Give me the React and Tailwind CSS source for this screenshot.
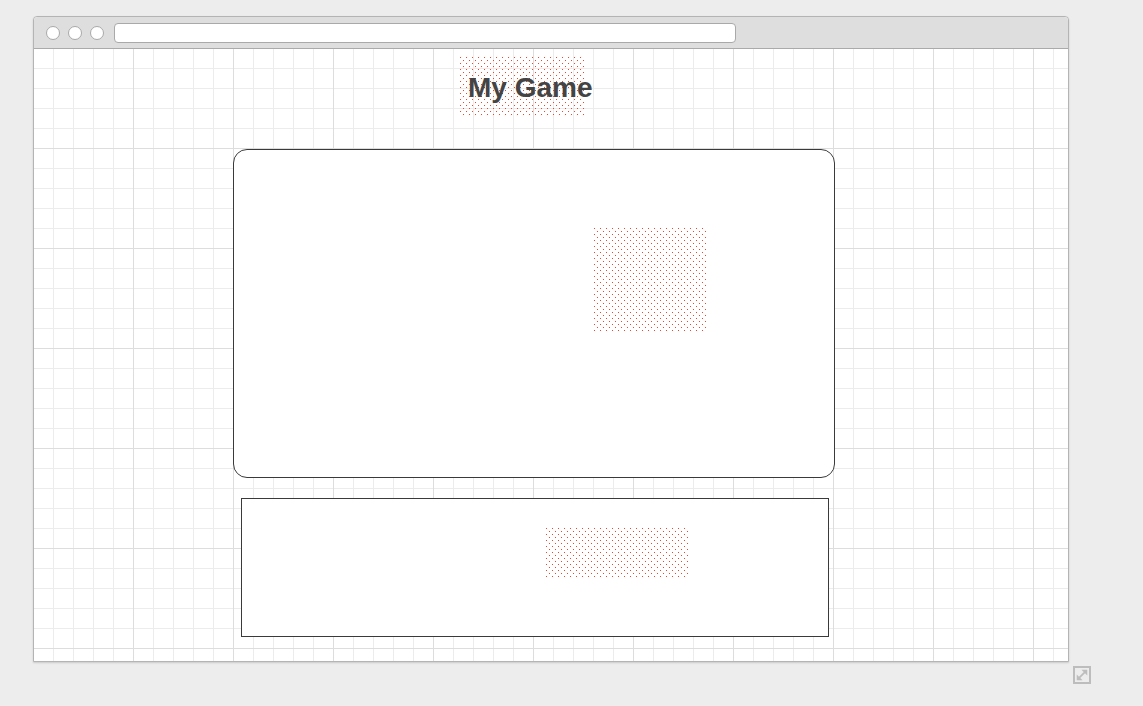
import React from "react";

// dotted red fill used by the mockup placeholders (crisp 1px dots, staggered)
const dots =
  "bg-[conic-gradient(from_270deg_at_1px_1px,#f0462c_90deg,transparent_0),conic-gradient(from_270deg_at_1px_1px,#f0462c_90deg,transparent_0)] bg-[length:6px_6px] bg-[position:1px_1px,4px_4px]";

export default function App() {
  return (
    <div className="relative w-[1143px] h-[706px] bg-[#ededed] overflow-hidden font-['Liberation_Sans',Arial,sans-serif]">
      <div className="absolute left-[33px] top-[16px] w-[1036px] h-[646px] flex flex-col border border-[#b4b4b4] rounded-t-[4px] bg-white shadow-[0_1px_2px_rgba(0,0,0,0.15)]">
        {/* title bar */}
        <div className="h-[32px] shrink-0 flex items-center bg-[#dedede] border-b border-[#aaaaaa] rounded-t-[4px] pl-[12px]">
          <div className="flex gap-[8px]">
            <span className="w-[14px] h-[14px] rounded-full bg-white border border-[#a9a9a9]" />
            <span className="w-[14px] h-[14px] rounded-full bg-white border border-[#a9a9a9]" />
            <span className="w-[14px] h-[14px] rounded-full bg-white border border-[#a9a9a9]" />
          </div>
          <div className="ml-[10px] w-[622px] h-[20px] bg-white border border-[#a9a9a9] rounded-[4px]" />
        </div>

        {/* canvas */}
        <div className="flex-1 flex flex-col bg-white bg-[linear-gradient(to_right,#dddddd_1px,transparent_1px),linear-gradient(to_bottom,#dddddd_1px,transparent_1px),linear-gradient(to_right,#ececec_1px,transparent_1px),linear-gradient(to_bottom,#ececec_1px,transparent_1px)] bg-[length:100px_100px,100px_100px,20px_20px,20px_20px] bg-[position:-1px_-1px]">
          <div className={`ml-[425px] mt-[7px] w-[126px] h-[59px] pt-[4px] ${dots}`}>
            <div className="ml-[9px] whitespace-nowrap text-[28px] leading-[56px] font-bold text-[#444444]">
              My Game
            </div>
          </div>

          <div className="ml-[199px] mt-[34px] w-[602px] h-[329px] bg-white border border-[#3a3a3a] rounded-[14px] pt-[77px] pl-[359px]">
            <div className={`w-[113px] h-[105px] ${dots}`} />
          </div>

          <div className="ml-[207px] mt-[20px] w-[588px] h-[139px] bg-white border border-[#3a3a3a] pt-[28px] pl-[303px]">
            <div className={`w-[145px] h-[52px] ${dots}`} />
          </div>
        </div>
      </div>

      {/* resize icon */}
      <div className="absolute left-[1073px] top-[666px] w-[18px] h-[18px] border-2 border-[#bdbdbd] flex items-center justify-center">
        <svg width="14" height="14" viewBox="0 0 12 12" fill="#bdbdbd" stroke="#bdbdbd" strokeWidth="1.5">
          <path d="M3.5 8.5 L8.5 3.5" fill="none" />
          <path d="M5.5 1.5 H10.5 V6.5 Z" stroke="none" />
          <path d="M1.5 5.5 V10.5 H6.5 Z" stroke="none" />
        </svg>
      </div>
    </div>
  );
}
